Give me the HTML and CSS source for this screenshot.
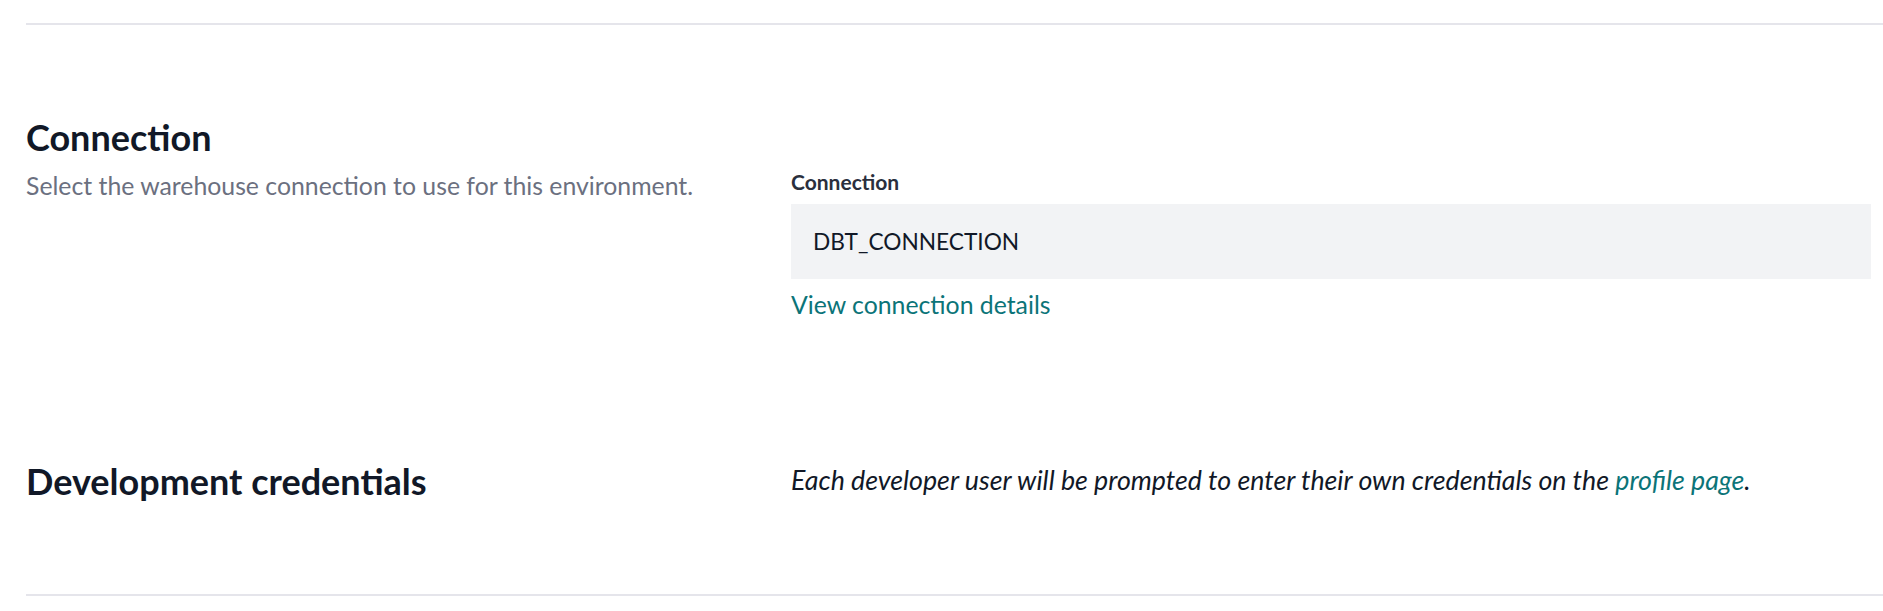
FILE: index.html
```html
<!DOCTYPE html>
<html lang="en">
<head>
<meta charset="utf-8">
<title>Environment settings</title>
<link rel="stylesheet" href="styles.css">
</head>
<body>
<div class="page">
  <hr class="divider">
  <div class="sections">
    <section class="row">
      <div class="intro">
        <h2 class="heading">Connection</h2>
        <p class="desc">Select the warehouse connection to use for this environment.</p>
      </div>
      <div class="field">
        <label class="label">Connection</label>
        <div class="select">DBT_CONNECTION</div>
        <a class="link" href="#">View connection details</a>
      </div>
    </section>
    <section class="row">
      <h2 class="heading">Development credentials</h2>
      <p class="note">Each developer user will be prompted to enter their own credentials on the <a class="link" href="#">profile page</a>.</p>
    </section>
  </div>
  <hr class="divider">
</div>
</body>
</html>
```
FILE: styles.css
```css
html, body {
  margin: 0;
  padding: 0;
  background: #ffffff;
}
body {
  font-family: Lato, "Open Sans", "Liberation Sans", sans-serif;
  color: #101828;
}
.page {
  padding: 23px 0 0 26px;
}
.divider {
  margin: 0;
  border: 0;
  height: 2px;
  background: #e5e5eb;
}
.sections {
  display: flex;
  flex-direction: column;
  gap: 136px;
  padding: 90px 12px 90px 0;
}
.row {
  display: grid;
  grid-template-columns: 765px 1fr;
  align-items: start;
}
.heading {
  margin: 0;
  font-size: 36px;
  line-height: 45px;
  font-weight: 700;
  color: #111827;
}
.desc {
  margin: 8px 0 0;
  font-size: 24.8px;
  line-height: 36px;
  color: #6b7080;
}
.field {
  display: flex;
  flex-direction: column;
  align-items: flex-start;
  padding-top: 52px;
}
.label {
  font-size: 21px;
  line-height: 30px;
  font-weight: 700;
  color: #2a2f3d;
}
.select {
  margin-top: 7px;
  align-self: stretch;
  box-sizing: border-box;
  height: 75px;
  padding: 0 22px;
  display: flex;
  align-items: center;
  background: #f2f3f5;
  font-size: 22.7px;
  line-height: 36px;
  color: #111827;
}
.link {
  color: #0b7478;
  text-decoration: none;
}
.field .link {
  margin-top: 8px;
  font-size: 24.8px;
  line-height: 36px;
}
.note {
  margin: 0;
  padding-top: 3px;
  font-size: 26.75px;
  line-height: 36px;
  font-style: italic;
  color: #111827;
}
```
